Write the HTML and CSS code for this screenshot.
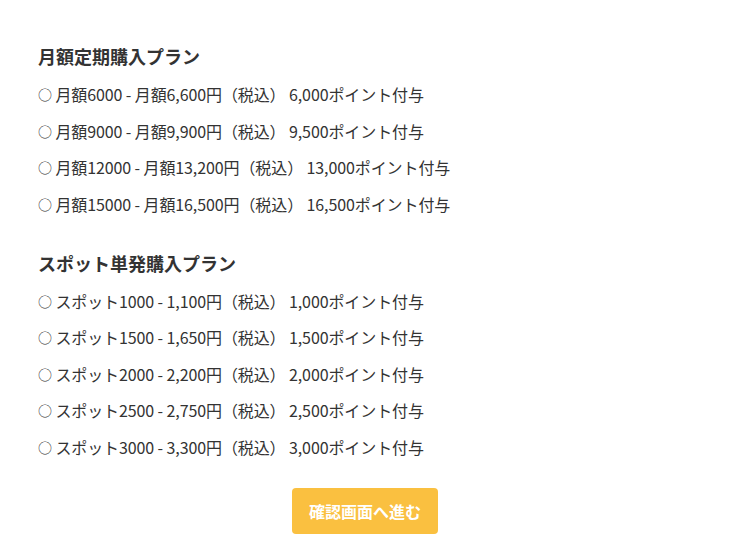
FILE: index.html
```html
<!DOCTYPE html>
<html lang="ja">
<head>
    <meta charset="UTF-8">
    <meta name="viewport" content="width=device-width, initial-scale=1.0">
    <title>ポイント購入</title>
    <link rel="stylesheet" href="styles.css">
</head>
<body>
    <div class="container">
        <form id="planForm">
            <section class="plan-group">
                <h2>月額定期購入プラン</h2>
                <ul class="plan-list">
                    <li><span class="mark">○</span> 月額6000 - 月額6,600円（税込） 6,000ポイント付与</li>
                    <li><span class="mark">○</span> 月額9000 - 月額9,900円（税込） 9,500ポイント付与</li>
                    <li><span class="mark">○</span> 月額12000 - 月額13,200円（税込） 13,000ポイント付与</li>
                    <li><span class="mark">○</span> 月額15000 - 月額16,500円（税込） 16,500ポイント付与</li>
                </ul>
            </section>

            <section class="plan-group">
                <h2>スポット単発購入プラン</h2>
                <ul class="plan-list">
                    <li><span class="mark">○</span> スポット1000 - 1,100円（税込） 1,000ポイント付与</li>
                    <li><span class="mark">○</span> スポット1500 - 1,650円（税込） 1,500ポイント付与</li>
                    <li><span class="mark">○</span> スポット2000 - 2,200円（税込） 2,000ポイント付与</li>
                    <li><span class="mark">○</span> スポット2500 - 2,750円（税込） 2,500ポイント付与</li>
                    <li><span class="mark">○</span> スポット3000 - 3,300円（税込） 3,000ポイント付与</li>
                </ul>
            </section>

            <div class="actions">
                <button type="button">確認画面へ進む</button>
            </div>
        </form>
    </div>
</body>
</html>
```

FILE: styles.css
```css
body {
    font-family: "Noto Sans CJK JP", "Noto Sans", sans-serif;
    margin: 0;
    background-color: #fff;
    color: #333;
}
.container {
    padding: 40px 45px 20px 38px;
}
.plan-group {
    margin-bottom: 28px;
}
.plan-group:last-of-type {
    margin-bottom: 26px;
}
.plan-group h2 {
    font-size: 18px;
    font-weight: bold;
    line-height: 1.8;
    margin: 0 0 8px;
}
.plan-list {
    list-style: none;
    margin: 0;
    padding: 0;
}
.plan-list li {
    font-size: 16px;
    line-height: 28.7px;
    margin-bottom: 7.8px;
    letter-spacing: -0.1px;
}
.mark {
    font-size: 14px;
    line-height: 1;
    vertical-align: 1px;
}
.actions {
    text-align: center;
}
button {
    background-color: #fac040;
    color: white;
    font-family: inherit;
    font-size: 16px;
    font-weight: bold;
    width: 146px;
    height: 46px;
    border: none;
    border-radius: 4px;
    cursor: pointer;
}
```
